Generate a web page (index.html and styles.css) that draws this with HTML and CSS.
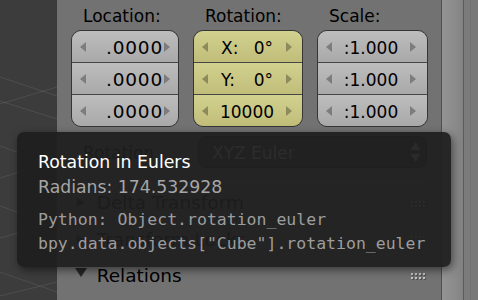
FILE: index.html
```html
<!DOCTYPE html>
<html>
<head>
<meta charset="utf-8">
<link rel="stylesheet" href="styles.css">
</head>
<body>
<div class="screen">
  <div class="viewport">
    <svg class="grid" width="57" height="300" viewBox="0 0 57 300">
      <g stroke="rgba(255,255,255,0.09)" stroke-width="1" fill="none">
        <line x1="0" y1="77" x2="57" y2="96"/>
        <line x1="0" y1="104" x2="57" y2="87"/>
        <line x1="0" y1="101" x2="57" y2="119"/>
        <line x1="0" y1="146" x2="57" y2="166"/>
        <line x1="0" y1="178" x2="57" y2="160"/>
        <line x1="0" y1="206" x2="57" y2="226"/>
        <line x1="0" y1="238" x2="57" y2="222"/>
        <line x1="0" y1="272" x2="57" y2="292"/>
        <line x1="0" y1="296" x2="57" y2="282"/>
      </g>
    </svg>
  </div>

  <div class="panel">
    <div class="transform">
      <div class="col">
        <div class="col-label">Location:</div>
        <div class="field loc">
          <div class="row"><span class="arr l"></span><span class="val right">.0000</span><span class="arr r"></span></div>
          <div class="row"><span class="arr l"></span><span class="val right">.0000</span><span class="arr r"></span></div>
          <div class="row"><span class="arr l"></span><span class="val right">.0000</span><span class="arr r"></span></div>
        </div>
      </div>
      <div class="col">
        <div class="col-label">Rotation:</div>
        <div class="field rot">
          <div class="row"><span class="arr l"></span><span class="lbl">X:</span><span class="num">0°</span><span class="arr r"></span></div>
          <div class="row"><span class="arr l"></span><span class="lbl">Y:</span><span class="num">0°</span><span class="arr r"></span></div>
          <div class="row"><span class="arr l"></span><span class="val">10000</span><span class="arr r"></span></div>
        </div>
      </div>
      <div class="col">
        <div class="col-label">Scale:</div>
        <div class="field scl">
          <div class="row"><span class="arr l"></span><span class="val">:1.000</span><span class="arr r"></span></div>
          <div class="row"><span class="arr l"></span><span class="val">:1.000</span><span class="arr r"></span></div>
          <div class="row"><span class="arr l"></span><span class="val">:1.000</span><span class="arr r"></span></div>
        </div>
      </div>
    </div>

    <div class="mode-row">
      <span class="mode-label">Rotation</span>
      <div class="dropdown">
        <span class="dd-text">XYZ Euler</span>
        <svg class="updown" width="9" height="20" viewBox="0 0 9 20">
          <polygon points="4.5,0 9,8 0,8" fill="#cfcfcf"/>
          <polygon points="0,12 9,12 4.5,20" fill="#cfcfcf"/>
        </svg>
      </div>
    </div>

    <div class="hdr first">
      <svg class="tri right" width="12" height="9" viewBox="0 0 12 9"><polygon points="1.7,0 10,4.5 1.7,9" fill="#1e1e1e"/></svg>
      <span class="hdr-text">Delta Transform</span>
      <svg class="dots" width="15" height="7" viewBox="0 0 15 7">
        <g fill="#505050"><rect x="1" y="1" width="2" height="2"/><rect x="5" y="1" width="2" height="2"/><rect x="9" y="1" width="2" height="2"/><rect x="13" y="1" width="2" height="2"/><rect x="1" y="5" width="2" height="2"/><rect x="5" y="5" width="2" height="2"/><rect x="9" y="5" width="2" height="2"/><rect x="13" y="5" width="2" height="2"/></g>
        <g fill="#c4c4c4"><rect x="0" y="0" width="2" height="2"/><rect x="4" y="0" width="2" height="2"/><rect x="8" y="0" width="2" height="2"/><rect x="12" y="0" width="2" height="2"/><rect x="0" y="4" width="2" height="2"/><rect x="4" y="4" width="2" height="2"/><rect x="8" y="4" width="2" height="2"/><rect x="12" y="4" width="2" height="2"/></g>
      </svg>
    </div>
    <div class="hdr">
      <svg class="tri right" width="12" height="9" viewBox="0 0 12 9"><polygon points="1.7,0 10,4.5 1.7,9" fill="#1e1e1e"/></svg>
      <span class="hdr-text">Transform Locks</span>
      <svg class="dots" width="15" height="7" viewBox="0 0 15 7">
        <g fill="#505050"><rect x="1" y="1" width="2" height="2"/><rect x="5" y="1" width="2" height="2"/><rect x="9" y="1" width="2" height="2"/><rect x="13" y="1" width="2" height="2"/><rect x="1" y="5" width="2" height="2"/><rect x="5" y="5" width="2" height="2"/><rect x="9" y="5" width="2" height="2"/><rect x="13" y="5" width="2" height="2"/></g>
        <g fill="#c4c4c4"><rect x="0" y="0" width="2" height="2"/><rect x="4" y="0" width="2" height="2"/><rect x="8" y="0" width="2" height="2"/><rect x="12" y="0" width="2" height="2"/><rect x="0" y="4" width="2" height="2"/><rect x="4" y="4" width="2" height="2"/><rect x="8" y="4" width="2" height="2"/><rect x="12" y="4" width="2" height="2"/></g>
      </svg>
    </div>
    <div class="hdr">
      <svg class="tri down" width="12" height="9" viewBox="0 0 12 9"><polygon points="0,0 12,0 6,9" fill="#262626"/></svg>
      <span class="hdr-text">Relations</span>
      <svg class="dots" width="15" height="7" viewBox="0 0 15 7">
        <g fill="#505050"><rect x="1" y="1" width="2" height="2"/><rect x="5" y="1" width="2" height="2"/><rect x="9" y="1" width="2" height="2"/><rect x="13" y="1" width="2" height="2"/><rect x="1" y="5" width="2" height="2"/><rect x="5" y="5" width="2" height="2"/><rect x="9" y="5" width="2" height="2"/><rect x="13" y="5" width="2" height="2"/></g>
        <g fill="#c4c4c4"><rect x="0" y="0" width="2" height="2"/><rect x="4" y="0" width="2" height="2"/><rect x="8" y="0" width="2" height="2"/><rect x="12" y="0" width="2" height="2"/><rect x="0" y="4" width="2" height="2"/><rect x="4" y="4" width="2" height="2"/><rect x="8" y="4" width="2" height="2"/><rect x="12" y="4" width="2" height="2"/></g>
      </svg>
    </div>
  </div>

  <div class="scroll"></div>

  <div class="tooltip">
    <div class="tip-title">Rotation in Eulers</div>
    <div class="tip-desc">Radians: 174.532928</div>
    <div class="tip-py">
      <div>Python: Object.rotation_euler</div>
      <div>bpy.data.objects["Cube"].rotation_euler</div>
    </div>
  </div>
</div>
</body>
</html>
```

FILE: styles.css
```css
html, body {
  margin: 0;
  padding: 0;
}
body {
  width: 478px;
  height: 300px;
  overflow: hidden;
  font-family: "DejaVu Sans", "Liberation Sans", sans-serif;
  color: #000;
}
.screen {
  position: relative;
  display: flex;
  width: 478px;
  height: 300px;
}
.viewport {
  flex: none;
  width: 57px;
  height: 300px;
  background: #3c3c3c;
}
.grid {
  display: block;
}
.panel {
  flex: none;
  width: 384px;
  height: 300px;
  box-sizing: border-box;
  padding: 6px 13px 0 14px;
  background: #727272;
}
.scroll {
  flex: 1;
  background: linear-gradient(to right,
    #4f4f4f 0, #4f4f4f 1px,
    #939393 1px, #8c8c8c 12px, #838383 22px,
    #5b5b5b 22px, #5b5b5b 23px,
    #7b7b7b 23px, #7b7b7b 29px,
    #717171 29px, #717171 30px,
    #787878 30px);
}

/* transform fields */
.transform {
  display: grid;
  grid-template-columns: 108px 110px 111px;
  column-gap: 14px;
}
.col-label {
  font-size: 17px;
  line-height: 20px;
  padding-left: 12px;
  margin-bottom: 4px;
}
.field {
  border: 1px solid #353535;
  border-radius: 10px;
  overflow: hidden;
}
.row {
  height: 31px;
  display: flex;
  align-items: center;
  padding: 0 8px;
  background: linear-gradient(#bdbdbd, #a9a9a9);
  font-size: 17px;
}
.row + .row {
  border-top: 1px solid #464646;
}
.field.rot .row {
  background: linear-gradient(#d3d18f, #bfbd78);
  padding-right: 10px;
}
.field.scl .row {
  padding-right: 11px;
}
.arr {
  flex: none;
  width: 0;
  height: 0;
  border-top: 5px solid transparent;
  border-bottom: 5px solid transparent;
}
.arr.l {
  border-right: 6px solid rgba(0, 0, 0, 0.3);
}
.arr.r {
  border-left: 6px solid rgba(0, 0, 0, 0.3);
}
.val, .lbl, .num {
  line-height: 20px;
  padding-top: 3px;
  white-space: nowrap;
}
.val {
  flex: 1;
  text-align: center;
}
.val.right {
  text-align: right;
  font-size: 18.5px;
  letter-spacing: 0.8px;
  margin-right: 1px;
  padding-top: 2px;
}
.lbl {
  margin-left: 13px;
}
.num {
  flex: 1;
  text-align: right;
  margin-right: 13px;
}

/* rotation mode row */
.mode-row {
  margin-top: 9px;
  height: 32px;
  display: flex;
  align-items: center;
}
.mode-label {
  padding-left: 12px;
  font-size: 17px;
  line-height: 20px;
  padding-top: 2px;
}
.dropdown {
  margin-left: auto;
  margin-right: 1px;
  width: 229px;
  height: 32px;
  box-sizing: border-box;
  border: 1px solid #2e2e2e;
  border-radius: 8px;
  background: #474747;
  display: flex;
  align-items: center;
  padding: 0 6px 0 13px;
}
.dd-text {
  flex: 1;
  color: #d8d8d8;
  font-size: 17px;
  line-height: 20px;
  padding-top: 2px;
}
.updown {
  display: block;
}

/* panel headers */
.hdr {
  height: 36.5px;
  display: flex;
  align-items: flex-start;
}
.hdr.first {
  margin-top: 14px;
  border-top: 1px solid #888;
  height: 35.5px;
}
.tri {
  flex: none;
  display: block;
  margin-left: 4px;
}
.tri.right {
  margin-top: 16px;
}
.tri.down {
  margin-top: 13px;
}
.hdr.first .tri.right {
  margin-top: 15px;
}
.hdr-text {
  margin-left: 9.7px;
  font-size: 18.5px;
  padding-top: 6px;
  line-height: 30.5px;
  white-space: nowrap;
}
.hdr.first .hdr-text {
  padding-top: 5px;
}
.dots {
  display: block;
  margin-left: auto;
  margin-right: 2px;
  margin-top: 17.7px;
}

/* tooltip */
.tooltip {
  position: absolute;
  left: 17px;
  top: 132px;
  width: 434px;
  height: 135px;
  box-sizing: border-box;
  padding: 17.5px 21px 0 21px;
  background: rgba(30, 30, 30, 0.93);
  border-radius: 7px;
  box-shadow: 2px 3px 9px rgba(0, 0, 0, 0.5);
}
.tip-title {
  color: #ffffff;
  font-size: 17.3px;
  line-height: 25px;
  white-space: nowrap;
}
.tip-desc {
  color: #a6a6a6;
  font-size: 17.3px;
  line-height: 25px;
  white-space: nowrap;
}
.tip-py {
  margin-top: 8.8px;
  color: #9d9d9d;
  font-family: "DejaVu Sans Mono", "Liberation Mono", monospace;
  font-size: 16.5px;
  line-height: 24px;
  white-space: nowrap;
}
```
